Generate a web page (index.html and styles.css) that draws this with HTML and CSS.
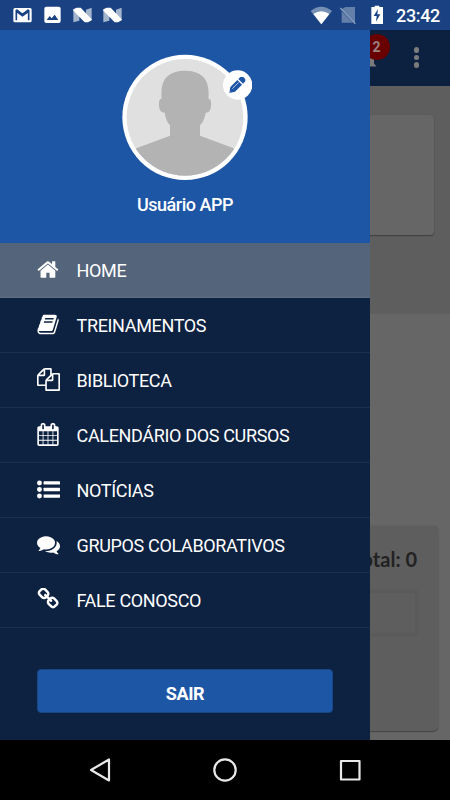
FILE: index.html
```html
<!DOCTYPE html>
<html lang="pt-BR">
<head>
<meta charset="utf-8">
<title>Menu</title>
<link rel="stylesheet" href="styles.css">
</head>
<body>
<div class="statusbar">
  <svg class="status-left" width="124" height="30" viewBox="0 0 372 90">
    <rect x="40" y="24" width="55" height="43" rx="5" fill="#fff"/>
    <path d="M49 61V34L67.500 47 86 34V61M49 29L67.500 43 86 29" fill="none" stroke="#1a4283" stroke-width="5"/>
    <rect x="133" y="20" width="49" height="49" rx="6" fill="#fff"/>
    <path d="M140 60L149 48 155 55 164 44 175 60Z" fill="#1a4283"/>
    <g id="n">
      <path d="M220 29L238 35V62L220 67ZM258 29L275 23V60L258 57Z" fill="#a3b4cd"/>
      <path d="M220 28L230 23H242L275 58V61L264 67H254L220 32Z" fill="#fff"/>
    </g>
    <use href="#n" x="90"/>
  </svg>
  <div class="status-right">
    <svg width="78" height="30" viewBox="0 0 234 90">
      <path d="M2 33Q33 7 66 33L34 73Z" fill="#7690b5"/>
      <path d="M10 42Q34 25 58 42L34 73Z" fill="#fff"/>
      <path d="M106 21H135V68L95 28ZM95 34L129 68H95Z" fill="#647fa9"/>
      <path d="M91 24L136 71" stroke="#8ba0c0" stroke-width="4"/>
      <path d="M184 21H194V17H208V21H219V72H184Z" fill="#fff"/>
      <path d="M204 27L191 48H200L198 65 211 43H202Z" fill="#1a4283"/>
    </svg>
    <span class="clock">23:42</span>
  </div>
</div>

<main class="app">
  <div class="page">
    <header class="toolbar">
      <div class="bell">
        <svg width="26" height="26" viewBox="0 0 26 26"><path d="M13 2C8 2 5 6 5 11V21L1.500 24.500H24.500L22 21.500V11C22 6 18 2 13 2Z" fill="#7a7a7a"/></svg>
        <span class="badge">2</span>
      </div>
      <div class="more"><i></i><i></i><i></i></div>
    </header>
    <section class="hero"><div class="card"></div></section>
    <section class="summary">
      <div class="panel">
        <div class="total">Total: 0</div>
        <div class="field"></div>
      </div>
    </section>
  </div>

  <aside class="drawer">
    <div class="profile">
      <div class="avatar">
        <svg width="130" height="126" viewBox="36 27 390 378">
          <defs><clipPath id="face"><circle cx="225" cy="217" r="175"/></clipPath></defs>
          <circle cx="225" cy="217" r="188" fill="#fff"/>
          <circle cx="225" cy="217" r="175" fill="#e0e0e0"/>
          <path clip-path="url(#face)" fill="#b3b3b3" d="M155 161C149 105 172 77 225 77S301 105 295 161C303 161 304 169 303 183C302 196 296 204 287 203C284 220 279 232 270 241V272L371 310 410 410H40L79 310 180 272V241C171 232 167 220 164 203C154 203 148 196 147 183C146 169 148 161 155 161Z"/>
          <circle cx="383" cy="120" r="44" fill="#fff"/>
          <path d="M358 144L361 126 382 105 396 119 375 140ZM385 102L391 96H400L406 103V109L399 116Z" fill="#1e56a6"/>
          <path d="M367 131L386 112M361 140L363 142" stroke="#fff" stroke-width="2"/>
        </svg>
      </div>
      <div class="name">Usuário APP</div>
    </div>
    <nav class="menu">
      <a class="item active"><svg class="icon" viewBox="45 0 1792 1792"><path d="M1472 992v480q0 26-19 45t-45 19h-384v-384h-256v384h-384q-26 0-45-19t-19-45v-480q0-1 .5-3t.5-3l575-474 575 474q1 2 1 6zm223-69l-62 74q-8 9-21 11h-3q-13 0-21-7l-692-577-692 577q-12 8-24 7-13-2-21-11l-62-74q-8-10-7-23.500t11-21.500l719-599q32-26 76-26t76 26l244 204v-195q0-14 9-23t23-9h192q14 0 23 9t9 23v408l219 182q10 8 11 21.500t-7 23.500z"/></svg><span>HOME</span></a>
      <a class="item"><svg class="icon" viewBox="30 0 1792 1792"><path d="M1703 478q40 57 18 129l-275 906q-19 64-76.500 107.500t-122.500 43.500h-923q-77 0-148.500-53.500t-99.500-131.500q-24-67-2-127 0-4 3-27t4-37q1-8-3-21.500t-3-19.500q2-11 8-21t16.500-23.500 16.500-23.500q23-38 45-91.500t30-91.500q3-10 .5-30t-.5-28q3-11 17-28t17-23q21-36 42-92t25-90q1-9-2.500-32t.5-28q4-13 22-30.500t22-22.500q19-26 42.500-84.500t27.500-96.500q1-8-3-25.500t-2-26.500q2-8 9-18t18-23 17-21q8-12 16.500-30.500t15-35 16-36 19.500-32 26.500-23.500 36-11.500 47.500 5.500l-1 3q38-9 51-9h761q74 0 114 56t18 130l-274 906q-36 119-71.500 153.500t-128.500 34.500h-869q-27 0-38 15-11 16-1 43 24 70 144 70h923q29 0 56-15.500t35-41.500l300-987q7-22 5-57 38 15 59 43zm-1064 2q-4 13 2 22.500t20 9.500h608q13 0 25.500-9.500t16.500-22.500l21-64q4-13-2-22.500t-20-9.500h-608q-13 0-25.500 9.500t-16.500 22.500zm-83 256q-4 13 2 22.500t20 9.500h608q13 0 25.500-9.500t16.500-22.500l21-64q4-13-2-22.500t-20-9.500h-608q-13 0-25.500 9.500t-16.500 22.500z"/></svg><span>TREINAMENTOS</span></a>
      <a class="item"><svg class="icon" viewBox="0 0 1792 1792"><path d="M1696 384q40 0 68 28t28 68v1216q0 40-28 68t-68 28h-960q-40 0-68-28t-28-68v-288h-544q-40 0-68-28t-28-68v-672q0-40 20-88t48-76l408-408q28-28 76-48t88-20h416q40 0 68 28t28 68v328q68-40 128-40h416zm-544 213l-299 299h299v-299zm-640-384l-299 299h299v-299zm196 647l316-316v-416h-384v416q0 40-28 68t-68 28h-416v640h512v-256q0-40 20-88t48-76zm956 804v-1152h-384v416q0 40-28 68t-68 28h-416v640h896z"/></svg><span>BIBLIOTECA</span></a>
      <a class="item"><svg class="icon" viewBox="40 0 1792 1792"><path d="M192 1664h288v-288h-288v288zm352 0h320v-288h-320v288zm-352-352h288v-320h-288v320zm352 0h320v-320h-320v320zm-352-384h288v-288h-288v288zm736 736h320v-288h-320v288zm-384-736h320v-288h-320v288zm768 736h288v-288h-288v288zm-384-352h320v-320h-320v320zm-352-864v-288q0-13-9.500-22.500t-22.500-9.500h-64q-13 0-22.500 9.500t-9.500 22.500v288q0 13 9.500 22.500t22.500 9.500h64q13 0 22.500-9.500t9.500-22.500zm736 864h288v-320h-288v320zm-384-384h320v-288h-320v288zm384 0h288v-288h-288v288zm32-480v-288q0-13-9.500-22.500t-22.500-9.500h-64q-13 0-22.500 9.500t-9.500 22.500v288q0 13 9.500 22.500t22.500 9.500h64q13 0 22.500-9.500t9.500-22.500zm384-64v1280q0 52-38 90t-90 38h-1408q-52 0-90-38t-38-90v-1280q0-52 38-90t90-38h128v-96q0-66 47-113t113-47h64q66 0 113 47t47 113v96h384v-96q0-66 47-113t113-47h64q66 0 113 47t47 113v96h128q52 0 90 38t38 90z"/></svg><span>CALENDÁRIO DOS CURSOS</span></a>
      <a class="item"><svg class="icon" viewBox="0 0 1792 1792"><circle cx="192" cy="384" r="192"/><circle cx="192" cy="896" r="192"/><circle cx="192" cy="1408" r="192"/><rect x="512" y="256" width="1280" height="256" rx="32"/><rect x="512" y="768" width="1280" height="256" rx="32"/><rect x="512" y="1280" width="1280" height="256" rx="32"/></svg><span>NOTÍCIAS</span></a>
      <a class="item"><svg class="icon" viewBox="0 0 1792 1792"><path d="M1408 768q0 139-94 257t-256.500 186.500-353.500 68.500q-86 0-176-16-124 88-278 128-36 9-86 16h-3q-11 0-20.500-8t-11.500-21q-1-3-1-6.500t.5-6.500 2-6l2.500-5 3.500-5.500 4-5 4.500-5 4-4.500q5-6 23-25t26-29.500 22.500-29 25-38.500 20.500-44q-124-72-195-177t-71-224q0-139 94-257t256.500-186.500 353.500-68.500 353.500 68.500 256.500 186.500 94 257zm384 256q0 120-71 224.500t-195 176.500q10 24 20.500 44t25 38.500 22.500 29 26 29.500 23 25q1 1 4 4.500t4.500 5 4 5 3.500 5.500l2.500 5 2 6 .5 6.500-1 6.500q-3 14-13 22t-22 7q-50-7-86-16-154-40-278-128-90 16-176 16-271 0-472-132 58 4 88 4 161 0 309-45t264-129q125-92 192-212t67-254q0-77-23-152 129 71 204 178t75 230z"/></svg><span>GRUPOS COLABORATIVOS</span></a>
      <a class="item"><svg class="icon" viewBox="28 60 1792 1792"><path d="M1520 1216q0-40-28-68l-208-208q-28-28-68-28-42 0-72 32 3 3 19 18.500t21.500 21.500 15 19 13 25.500 3.500 27.500q0 40-28 68t-68 28q-15 0-27.500-3.500t-25.500-13-19-15-21.500-21.500-18.500-19q-33 31-33 73 0 40 28 68l206 207q27 27 68 27 40 0 68-26l147-146q28-28 28-67zm-703-705q0-40-28-68l-206-207q-28-28-68-28-39 0-68 27l-147 146q-28 28-28 67 0 40 28 68l208 208q27 27 68 27 42 0 72-31-3-3-19-18.500t-21.500-21.500-15-19-13-25.500-3.500-27.500q0-40 28-68t68-28q15 0 27.500 3.500t25.500 13 19 15 21.500 21.500 18.500 19q33-31 33-73zm895 705q0 120-85 203l-147 146q-83 83-203 83-121 0-204-85l-206-207q-83-83-83-203 0-123 88-209l-88-88q-86 88-208 88-120 0-204-84l-208-208q-84-84-84-204t85-203l147-146q83-83 203-83 121 0 204 85l206 207q83 83 83 203 0 123-88 209l88 88q86-88 208-88 120 0 204 84l208 208q84 84 84 204z"/></svg><span>FALE CONOSCO</span></a>
    </nav>
    <button class="logout">SAIR</button>
  </aside>
</main>

<footer class="navbar">
  <svg width="26" height="26" viewBox="0 0 26 26"><path d="M22 2.500V23.500L4 13Z"/></svg>
  <svg width="26" height="26" viewBox="0 0 26 26"><circle cx="13" cy="13" r="10.700"/></svg>
  <svg width="26" height="26" viewBox="0 0 26 26"><rect x="4" y="4" width="18.500" height="18.500"/></svg>
</footer>
</body>
</html>
```
FILE: styles.css
```css
* { box-sizing: border-box; }
body {
  margin: 0;
  width: 450px;
  height: 800px;
  overflow: hidden;
  display: flex;
  flex-direction: column;
  font-family: Roboto, sans-serif;
  color: #fff;
  background: #000;
}
svg { display: block; flex: none; }

.statusbar {
  height: 30px;
  flex: none;
  background: #1a4283;
  display: flex;
  justify-content: space-between;
}
.status-right {
  display: flex;
  align-items: center;
  padding-right: 9px;
  gap: 8px;
}
.clock {
  width: 45px;
  font-size: 18px;
  line-height: 30px;
  font-weight: 500;
  letter-spacing: -0.35px;
  white-space: nowrap;
  padding-top: 2px;
}

.app {
  position: relative;
  height: 710px;
  flex: none;
  overflow: hidden;
}
.page {
  height: 710px;
  display: flex;
  flex-direction: column;
  background: #666;
}
.toolbar {
  height: 56px;
  flex: none;
  background: #0c2140;
  display: flex;
  justify-content: flex-end;
  align-items: center;
  gap: 36px;
  padding-right: 31px;
}
.bell { position: relative; margin-top: -7px; }
.badge {
  position: absolute;
  left: 12px;
  top: -8px;
  width: 26px;
  height: 26px;
  border-radius: 50%;
  background: #680000;
  color: #9b8080;
  font-size: 14px;
  font-weight: 700;
  line-height: 27px;
  text-align: center;
}
.more { display: flex; flex-direction: column; gap: 2px; margin-top: -1px; }
.more i { width: 5.5px; height: 5.5px; border-radius: 50%; background: #7b7b7b; }
.hero {
  height: 228px;
  flex: none;
  background: #5e5e5e;
  padding: 29px 16px;
}
.card {
  height: 120px;
  border-radius: 4px;
  background: #666;
  box-shadow: 0 1px 1px #414141, 0 0 2px #555;
}
.summary { padding: 212px 12px 0; }
.panel {
  height: 205px;
  border-radius: 5px;
  background: #5e5e5e;
  padding: 20px 21px 0;
  box-shadow: 0 1px 1px #454545, 0 0 2px #5a5a5a;
}
.total {
  text-align: right;
  font: 700 20px/26px Lato, sans-serif;
  color: #222;
}
.field {
  height: 46px;
  margin: 18px -1px 0;
  border: 3px solid #5a5a5a;
  border-radius: 5px;
  background: #5e5e5e;
  box-shadow: 0 0 2px #5a5a5a;
}

.drawer {
  position: absolute;
  inset: 0 auto 0 0;
  width: 370px;
  background: #0d2141;
}
.profile {
  height: 213px;
  background: #1e56a6;
  display: flex;
  flex-direction: column;
  align-items: center;
  padding-top: 24px;
}
.avatar { padding-left: 4px; }
.name {
  margin-top: 14px;
  font-size: 18px;
  line-height: 22px;
  font-weight: 500;
  letter-spacing: -0.48px;
}
.item {
  height: 55px;
  display: flex;
  align-items: center;
  gap: 16.5px;
  padding-left: 37px;
  border-bottom: 1px solid #1b2e4c;
  font-size: 18px;
  letter-spacing: -0.34px;
}
.item span { padding-top: 1px; }
.active { background: #54647b; border-color: #5e6e85; }
.icon { width: 23px; height: 23px; margin-top: -1px; fill: #fff; }
.logout {
  display: block;
  width: 296px;
  height: 44px;
  margin: 41px 0 0 37px;
  padding: 5px 0 0;
  border: 1px solid #194684;
  border-radius: 4px;
  background: #1e56a6;
  color: #fff;
  font: 700 18px/20px Roboto, sans-serif;
  letter-spacing: -0.4px;
}

.navbar {
  height: 60px;
  flex: none;
  background: #000;
  display: flex;
  justify-content: space-between;
  align-items: center;
  padding: 0 87px;
}
.navbar svg { fill: none; stroke: #e8e8e8; stroke-width: 2.2; stroke-linejoin: round; }
```
